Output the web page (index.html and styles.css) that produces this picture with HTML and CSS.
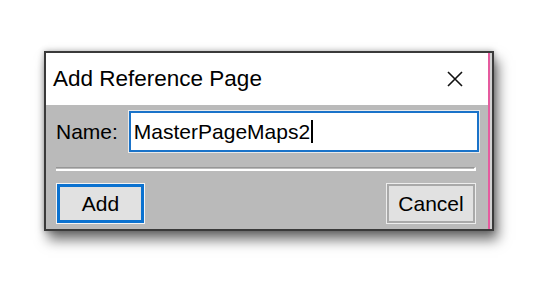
FILE: index.html
```html
<!DOCTYPE html>
<html lang="en">
<head>
    <meta charset="UTF-8">
    <title>Add Reference Page</title>
    <link rel="stylesheet" href="styles.css">
</head>
<body>
    <div class="desktop">
        <div class="dialog">
            <div class="frame">
                <div class="titlebar">
                    <span class="title">Add Reference Page</span>
                    <svg class="close" width="16" height="16" viewBox="0 0 16 16">
                        <path d="M1 1 L15 15 M15 1 L1 15" stroke="#111" stroke-width="1.6" fill="none"/>
                    </svg>
                </div>
                <div class="content">
                    <div class="field">
                        <label class="label">Name:</label>
                        <div class="input"><span class="value">MasterPageMaps2</span><span class="caret"></span></div>
                    </div>
                    <div class="separator"></div>
                    <div class="buttons">
                        <div class="btn btn-default">Add</div>
                        <div class="btn">Cancel</div>
                    </div>
                </div>
            </div>
        </div>
    </div>
</body>
</html>
```

FILE: styles.css
```css
html, body {
    margin: 0;
    height: 100%;
    background-color: #fff;
}
body {
    font-family: "Liberation Sans", Arial, sans-serif;
    color: #000;
}
.desktop {
    height: 100%;
    box-sizing: border-box;
    padding: 51px 0 0 44px;
}
.dialog {
    width: 450px;
    box-sizing: border-box;
    border: 2px solid #3a3a3a;
    padding-right: 2px;
    background-color: #d2d2d2;
    box-shadow: 4px 9px 12px rgba(0, 0, 0, 0.55), 0 0 6px rgba(0, 0, 0, 0.3);
}
.frame {
    border-right: 2px solid #e65b9f;
}
.titlebar {
    height: 52px;
    background-color: #fff;
    display: flex;
    align-items: center;
    justify-content: space-between;
    padding: 0 25px 0 7px;
}
.title {
    font-size: 22.5px;
}
.close {
    display: block;
}
.content {
    background-color: #bababa;
    padding: 5px 8px 5px 10px;
}
.field {
    display: flex;
    align-items: center;
    gap: 10px;
}
.label {
    font-size: 21px;
}
.input {
    flex: 1;
    height: 43px;
    box-sizing: border-box;
    border: 1px solid #eaeaea;
    box-shadow: inset 0 0 0 2px #1a73c9;
    background-color: #fff;
    display: flex;
    align-items: center;
    padding-left: 5px;
    font-size: 21px;
}
.caret {
    width: 2px;
    height: 23px;
    background-color: #000;
    margin-left: 1px;
}
.separator {
    margin: 14px 4px 0 0;
    height: 1px;
    border-top: 1px solid #969696;
    border-bottom: 2px solid #fff;
    border-right: 2px solid #fff;
}
.buttons {
    display: flex;
    justify-content: space-between;
    margin: 12px 4px 0 0;
}
.btn {
    width: 90px;
    height: 41px;
    box-sizing: border-box;
    border: 1px solid #ededed;
    box-shadow: inset 0 0 0 2px #a9a9a9;
    background-color: #e1e1e1;
    display: flex;
    align-items: center;
    justify-content: center;
    font-size: 21px;
}
.btn-default {
    width: 89px;
    border-color: #f4f4f4;
    box-shadow: inset 0 0 0 3px #0b72d0;
}
```
